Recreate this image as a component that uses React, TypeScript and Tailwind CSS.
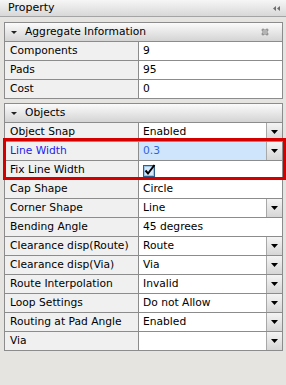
import React from "react";

type Row = {
  name: string;
  value?: string;
  drop?: boolean;
  check?: boolean;
  selected?: boolean;
};

const aggregate: Row[] = [
  { name: "Components", value: "9" },
  { name: "Pads", value: "95" },
  { name: "Cost", value: "0" },
];

const objects: Row[] = [
  { name: "Object Snap", value: "Enabled", drop: true },
  { name: "Line Width", value: "0.3", drop: true, selected: true },
  { name: "Fix Line Width", check: true },
  { name: "Cap Shape", value: "Circle" },
  { name: "Corner Shape", value: "Line", drop: true },
  { name: "Bending Angle", value: "45 degrees" },
  { name: "Clearance disp(Route)", value: "Route", drop: true },
  { name: "Clearance disp(Via)", value: "Via", drop: true },
  { name: "Route Interpolation", value: "Invalid", drop: true },
  { name: "Loop Settings", value: "Do not Allow", drop: true },
  { name: "Routing at Pad Angle", value: "Enabled", drop: true },
  { name: "Via", value: "", drop: true },
];

function DropButton() {
  return (
    <div className="w-[16px] h-full border-l border-[#a8a8a8] bg-gradient-to-b from-[#f4f4f4] to-[#d6d6d6] flex items-center justify-center">
      <svg width="7" height="4" viewBox="0 0 7 4">
        <path d="M0 0H7L3.5 4Z" fill="#000" />
      </svg>
    </div>
  );
}

function Check() {
  return (
    <svg width="13" height="13" viewBox="0 0 13 13">
      <rect x="0.5" y="1.5" width="11" height="11" fill="#d6e8fa" stroke="#2f5f8c" />
      <rect x="1.5" y="2.5" width="9" height="9" fill="none" stroke="#9cc3ea" />
      <path d="M2.5 6.5L5 9.5L11.5 1" stroke="#000" strokeWidth="2" fill="none" />
    </svg>
  );
}

function PropRow({ row }: { row: Row }) {
  return (
    <div className="flex h-[19px] border-t border-[#8c8c8c]">
      <div
        className={`w-[134px] shrink-0 bg-[#f0f0f0] border-r border-[#8c8c8c] pl-[5px] flex items-center whitespace-nowrap ${
          row.selected ? "text-[#2222ee]" : "text-black"
        }`}
      >
        {row.name}
      </div>
      <div className="flex-1 bg-white flex items-center">
        <div
          className={`flex-1 h-full flex items-center pl-[4px] ${
            row.selected ? "bg-[#cfe5fb] text-[#2f64e0]" : ""
          }`}
        >
          {row.check ? <Check /> : row.value}
        </div>
        {row.drop && <DropButton />}
      </div>
    </div>
  );
}

function Section({ title, rows, pin }: { title: string; rows: Row[]; pin?: boolean }) {
  return (
    <div className="border border-[#8c8c8c]">
      <div className="h-[18px] bg-gradient-to-b from-[#fbfbfb] to-[#d4d4d4] flex items-center pl-[6px] pr-[13px]">
        <svg width="6" height="3" viewBox="0 0 6 3" className="mr-[8px]">
          <path d="M0 0H6L3 3Z" fill="#222" />
        </svg>
        <span className="flex-1">{title}</span>
        {pin && (
          <svg width="8" height="8" viewBox="0 0 8 8">
            <path
              d="M2 0.5V7.5M6 0.5V7.5M0.5 2H7.5M0.5 6H7.5"
              stroke="#7a7a7a"
              strokeWidth="1"
              fill="none"
            />
            <rect x="2" y="2" width="4" height="4" fill="#b4b4b4" />
          </svg>
        )}
      </div>
      {rows.map((r) => (
        <PropRow key={r.name} row={r} />
      ))}
    </div>
  );
}

export default function App() {
  return (
    <div
      className="w-[286px] h-[385px] bg-[#e5e4e0] text-[10.7px] text-black overflow-hidden"
      style={{ fontFamily: '"DejaVu Sans", Verdana, sans-serif' }}
    >
      <div className="h-[17px] border-b border-[#a4a4a4] bg-gradient-to-b from-[#f6f6f6] to-[#d8d8d8] flex items-center pl-[8px] pr-[5px]">
        <span className="flex-1 text-[11px]">Property</span>
        <svg width="8" height="5" viewBox="0 0 8 5">
          <path d="M3 0V5L0 2.5Z M7 0V5L4 2.5Z" fill="#6e6e6e" />
        </svg>
      </div>
      <div className="pl-[4px] pr-[3px] pt-[5px]">
        <Section title="Aggregate Information" rows={aggregate} pin />
        <div className="relative mt-[4px]">
          <Section title="Objects" rows={objects} />
          <div className="absolute left-[-1px] top-[35px] w-[283px] h-[42px] border-[3px] border-[#d40000]" />
        </div>
      </div>
    </div>
  );
}
